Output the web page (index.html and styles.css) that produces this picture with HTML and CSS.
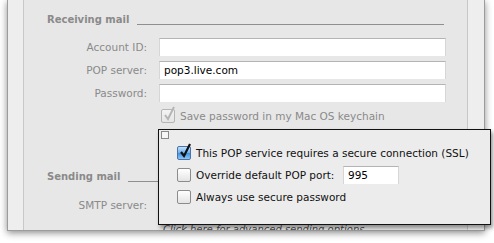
FILE: index.html
```html
<!DOCTYPE html>
<html lang="en">
<head>
  <meta charset="UTF-8">
  <title>Account settings - POP</title>
  <link rel="stylesheet" href="styles.css">
</head>
<body>

<div class="stage">
  <div class="window">
    <div class="gutter"></div>

    <div class="pane">
      <div class="section-title">
        <span>Receiving mail</span>
        <span class="rule"></span>
      </div>

      <div class="fields">
        <label>Account ID:</label>
        <span class="field"></span>

        <label>POP server:</label>
        <span class="field">pop3.live.com</span>

        <label>Password:</label>
        <span class="field"></span>

        <span></span>
        <div class="option option-disabled">
          <span class="check">
            <svg width="14" height="16" viewBox="0 0 14 16"><path d="M3 9 L6 13 L12 1" fill="none" stroke="#8e8e8e" stroke-width="2"/></svg>
          </span>
          Save password in my Mac OS keychain
        </div>
      </div>

      <div class="section-title sending">
        <span>Sending mail</span>
        <span class="rule"></span>
      </div>

      <div class="fields smtp">
        <label>SMTP server:</label>
        <span class="field"></span>
      </div>

      <div class="advanced">Click here for advanced sending options</div>
    </div>

    <div class="gutter gutter-right"></div>
  </div>

  <!-- POP options popup -->
  <div class="popup">
    <span class="mini-box"></span>
    <div class="popup-list">
      <div class="option">
        <span class="check check-on">
          <svg width="14" height="16" viewBox="0 0 14 16"><path d="M3 9 L6 13 L12 1" fill="none" stroke="#111" stroke-width="2.2"/></svg>
        </span>
        This POP service requires a secure connection (SSL)
      </div>
      <div class="option">
        <span class="check"></span>
        <span class="port-label">Override default POP port:</span>
        <span class="field port">995</span>
      </div>
      <div class="option">
        <span class="check"></span>
        Always use secure password
      </div>
    </div>
  </div>
</div>

</body>
</html>
```

FILE: styles.css
```css
body {
  margin: 0;
  background: #ffffff;
  font-family: "DejaVu Sans", Verdana, sans-serif;
  font-size: 10.5px;
}
.stage {
  position: relative;
  width: 494px;
  height: 243px;
}
.window {
  display: flex;
  margin-left: 7px;
  width: 478px;
  height: 231px;
  border: 1px solid #9c9c9c;
  border-top: none;
  box-sizing: border-box;
  background: #eeeeee;
  box-shadow: 0 2px 7px rgba(0,0,0,0.45);
}
.gutter {
  width: 15px;
  border-right: 1px solid #c8c8c8;
  background: #eeeeee;
}
.gutter-right {
  width: 16px;
  border-right: none;
  border-left: 1px solid #c8c8c8;
}
.pane {
  flex: 1;
  background: #e7e7e7;
  overflow: hidden;
}
.section-title {
  display: flex;
  align-items: flex-start;
  margin: 14px 23px 0 23px;
  font-size: 10px;
  font-weight: bold;
  line-height: 12px;
  color: #8a8a8a;
}
.rule {
  flex: 1;
  height: 1px;
  margin: 10px 0 0 8px;
  background: #8f8f8f;
}
.fields {
  display: grid;
  grid-template-columns: 123px 287px;
  grid-auto-rows: 18px;
  column-gap: 12px;
  row-gap: 5px;
  margin-top: 12px;
}
.fields label {
  text-align: right;
  line-height: 18px;
  color: #8a8a8a;
}
.field {
  background: #ffffff;
  border-top: 1px solid #b4b4b4;
  border-left: 1px solid #d6d6d6;
  border-right: 1px solid #d6d6d6;
  box-sizing: border-box;
  height: 18px;
  padding-left: 4px;
  line-height: 17px;
  color: #000;
}
.option {
  display: flex;
  align-items: center;
  height: 18px;
  color: #111;
}
.option-disabled {
  margin-left: 2px;
  color: #8a8a8a;
}
.option-disabled .check {
  opacity: 0.55;
}
.check {
  position: relative;
  width: 14px;
  height: 14px;
  margin-right: 5px;
  border: 1px solid #8c8c8c;
  border-radius: 2px;
  box-sizing: border-box;
  background: linear-gradient(#ffffff, #e4e4e4);
  flex-shrink: 0;
}
.check svg {
  position: absolute;
  left: 0;
  top: -4px;
}
.check-on {
  border-color: #4a72a6;
  background: linear-gradient(#c4e1fb, #6aaeee 50%, #3e8ee0 51%, #8cc6f7);
}
.sending {
  margin-top: 46px;
}
.smtp {
  margin-top: 13px;
}
.advanced {
  margin: 10px 0 0 139px;
  font-size: 10px;
  font-style: italic;
  line-height: 12px;
  color: #4a4a4a;
}
.popup {
  position: absolute;
  left: 158px;
  top: 129px;
  width: 333px;
  height: 96px;
  box-sizing: border-box;
  border: 1px solid #111;
  background: #ececec;
  box-shadow: 2px 3px 4px rgba(0,0,0,0.4);
}
.mini-box {
  display: block;
  width: 8px;
  height: 8px;
  margin: 1px 0 0 2px;
  border: 1px solid #8a8a8a;
  box-sizing: border-box;
  background: #f6f6f6;
}
.popup-list {
  display: flex;
  flex-direction: column;
  gap: 4px;
  margin: 5px 0 0 18px;
}
.port-label {
  width: 147px;
}
.field.port {
  width: 56px;
  padding-left: 4px;
}
```
